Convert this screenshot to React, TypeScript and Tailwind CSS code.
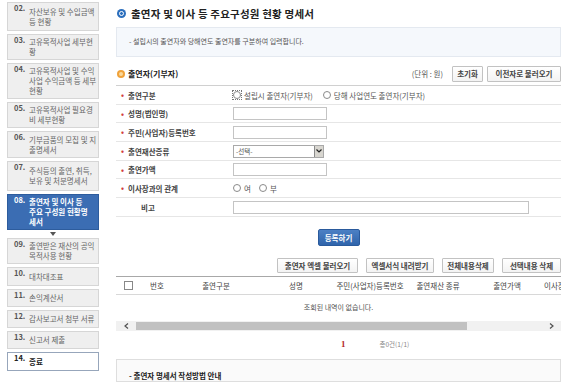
import React from 'react'

const menu = [
  { no: '02.', lines: ['자산보유 및 수입금액', '등 현황'], h: 'h-[29px]' },
  { no: '03.', lines: ['고유목적사업 세부현', '황'], h: 'h-[26px]' },
  { no: '04.', lines: ['고유목적사업 및 수익', '사업 수익금액 등 세부', '현황'], h: 'h-[36px]' },
  { no: '05.', lines: ['고유목적사업 필요경', '비 세부현황'], h: 'h-[26px]' },
  { no: '06.', lines: ['기부금품의 모집 및 지', '출명세서'], h: 'h-[27px]' },
  { no: '07.', lines: ['주식등의 출연, 취득,', '보유 및 처분명세서'], h: 'h-[30px]' },
  { no: '08.', lines: ['출연자 및 이사 등', '주요 구성원 현황명', '세서'], h: 'h-[36px]', active: true },
  { no: '09.', lines: ['출연받은 재산의 공익', '목적사용 현황'], h: 'h-[26px]' },
  { no: '10.', lines: ['대차대조표'], h: 'h-[19px]' },
  { no: '11.', lines: ['손익계산서'], h: 'h-[18px]' },
  { no: '12.', lines: ['감사보고서 첨부 서류'], h: 'h-[18px]' },
  { no: '13.', lines: ['신고서 제출'], h: 'h-[18px]' },
  { no: '14.', lines: ['종료'], h: 'h-[19px]', last: true },
]

const Radio = ({ focus }: { focus?: boolean }) => (
  <span className={`inline-flex items-center justify-center ${focus ? 'outline outline-1 outline-dotted outline-[#777]' : ''}`}>
    <span className="w-[8px] h-[8px] rounded-full border border-[#8a8a8a] bg-white" />
  </span>
)

const Input = ({ w = 'w-[94px]' }: { w?: string }) => (
  <div className={`${w} h-[13px] border border-[#c4c4c4] bg-white`} />
)

const Row = ({ label, bullet = true, h, children }: { label: string; bullet?: boolean; h: string; children?: React.ReactNode }) => (
  <div className={`flex ${h} border-b border-[#e6e6e6]`}>
    <div className="w-[112px] shrink-0 flex items-center pl-[5px] font-bold text-[#444]">
      {bullet ? <span className="w-[7px] text-[#d23c3c] text-[8px]">•</span> : <span className="w-[20px]" />}
      {label}
    </div>
    <div className="flex-1 flex items-center pl-[5px]">{children}</div>
  </div>
)

const Btn = ({ w, children }: { w: string; children: React.ReactNode }) => (
  <div className={`${w} h-full flex items-center justify-center border border-[#c2c2c2] bg-gradient-to-b from-white to-[#f3f3f3] font-bold text-[#444] rounded-[1px]`}>
    {children}
  </div>
)

const cols = [
  { t: '', w: 'w-[24px]' },
  { t: '번호', w: 'w-[34px]' },
  { t: '출연구분', w: 'w-[84px]' },
  { t: '성명', w: 'w-[76px]' },
  { t: '주민(사업자)등록번호', w: 'w-[72px]' },
  { t: '출연재산 종류', w: 'w-[64px]' },
  { t: '출연가액', w: 'w-[74px]' },
  { t: '이사장과의 관계', w: 'w-[80px]' },
]

export default function App() {
  return (
    <div className="w-[567px] h-[382px] overflow-hidden bg-white flex font-['Noto_Sans_CJK_KR','Noto_Sans',sans-serif] text-[7.5px] text-[#444]">
      {/* left step menu */}
      <aside className="w-[110px] shrink-0 pl-[7px] pt-[2px] flex flex-col gap-[3px] text-[7.5px]">
        {menu.map((m) => (
          <React.Fragment key={m.no}>
            <div
              className={`w-[92px] ${m.h} flex items-center pl-[6px] leading-[10px] border ${
                m.active
                  ? 'bg-[#3b6db3] border-[#2d5c9d] text-white font-bold'
                  : m.last
                  ? 'bg-white border-[#97a6bb] text-[#222] font-bold'
                  : 'bg-[#efefef] border-[#d6d6d6] text-[#666]'
              }`}
            >
              <span className={`w-[15px] shrink-0 self-start font-bold ${m.active ? 'text-white' : m.last ? 'text-[#222]' : 'text-[#555]'}`}>
                {m.no}
              </span>
              <div className="flex flex-col whitespace-nowrap">
                {m.lines.map((l) => (
                  <span key={l}>{l}</span>
                ))}
              </div>
            </div>
            {m.active && (
              <div className="w-[92px] h-[4px] -my-[1px] flex justify-center">
                <span className="w-0 h-0 border-l-[3px] border-r-[3px] border-t-[4px] border-l-transparent border-r-transparent border-t-[#555]" />
              </div>
            )}
          </React.Fragment>
        ))}
      </aside>

      {/* main content */}
      <main className="flex-1 min-w-0 pl-[6px] pr-[6px] flex flex-col">
        <div className="h-[27px] flex items-center gap-[5px] pl-[1px]">
          <span className="w-[9px] h-[9px] rounded-full bg-[#2c6fbd] flex items-center justify-center">
            <span className="w-[5px] h-[5px] rounded-full border border-white bg-[#2c6fbd]" />
          </span>
          <span className="text-[10.5px] font-bold text-[#222] tracking-[0.2px]">출연자 및 이사 등 주요구성원 현황 명세서</span>
        </div>

        <div className="h-[30px] flex items-center pl-[12px] bg-[#f5f8fc] border border-[#e4e9f0] text-[7px] text-[#555]">
          - 설립시의 출연자와 당해연도 출연자를 구분하여 입력합니다.
        </div>

        <div className="mt-[9px] h-[17px] flex items-center">
          <span className="w-[8px] h-[8px] rounded-full bg-[#f0a23a] flex items-center justify-center ml-[1px]">
            <span className="w-[4px] h-[4px] rounded-full bg-[#fbd89a]" />
          </span>
          <span className="ml-[3px] text-[8px] font-bold text-[#222]">출연자(기부자)</span>
          <span className="ml-auto text-[#555] mr-[9px]">(단위 : 원)</span>
          <div className="flex gap-[4px] h-full">
            <Btn w="w-[31px]">초기화</Btn>
            <Btn w="w-[74px]">이전자로 불러오기</Btn>
          </div>
        </div>

        <div className="mt-[3px] border-t border-[#d0d0d0]">
          <Row label="출연구분" h="h-[19px]">
            <div className="flex items-center gap-[3px] text-[#555]">
              <Radio focus />
              <span>설립시 출연자(기부자)</span>
              <span className="ml-[4px]" />
              <Radio />
              <span>당해 사업연도 출연자(기부자)</span>
            </div>
          </Row>
          <Row label="성명(법인명)" h="h-[18px]">
            <Input />
          </Row>
          <Row label="주민(사업자)등록번호" h="h-[19px]">
            <Input />
          </Row>
          <Row label="출연재산종류" h="h-[19px]">
            <div className="w-[91px] h-[13px] border border-[#a9a9a9] bg-white flex items-center">
              <span className="flex-1 pl-[2px] text-[6.5px] text-[#555]">-선택-</span>
              <span className="w-[9px] h-full bg-[#d8d6d0] border-l border-[#8a8a8a] flex items-center justify-center">
                <svg width="6" height="4" viewBox="0 0 6 4">
                  <path d="M0.5 0.5 L3 3 L5.5 0.5" fill="none" stroke="#222" strokeWidth="1.2" />
                </svg>
              </span>
            </div>
          </Row>
          <Row label="출연가액" h="h-[18px]">
            <Input />
          </Row>
          <Row label="이사장과의 관계" h="h-[19px]">
            <div className="flex items-center gap-[3px] text-[#555]">
              <Radio />
              <span>여</span>
              <span className="ml-[2px]" />
              <Radio />
              <span>부</span>
            </div>
          </Row>
          <Row label="비고" bullet={false} h="h-[19px]">
            <Input w="w-[296px]" />
          </Row>
        </div>

        <div className="mt-[12px] self-center h-[17px] w-[42px] rounded-[2px] bg-gradient-to-b from-[#4c80c4] to-[#2f64ab] border border-[#2a5a9c] text-white font-bold flex items-center justify-center">
          등록하기
        </div>

        <div className="mt-[12px] h-[15px] flex justify-end gap-[8px]">
          <Btn w="w-[81px]">출연자 엑셀 불러오기</Btn>
          <Btn w="w-[68px]">엑셀서식 내려받기</Btn>
          <Btn w="w-[52px]">전체내용삭제</Btn>
          <Btn w="w-[59px]">선택내용 삭제</Btn>
        </div>

        <div className="mt-[3px] overflow-hidden">
          <div className="w-max flex h-[19px] border-t border-[#a8a8a8] border-b border-b-[#d8d8d8] text-[#444]">
            {cols.map((c, i) => (
              <div key={i} className={`${c.w} shrink-0 flex items-center ${i === 7 ? 'justify-start' : 'justify-center'} whitespace-nowrap`}>
                {i === 0 ? <span className="w-[9px] h-[9px] border border-[#888] bg-white" /> : c.t}
              </div>
            ))}
          </div>
        </div>
        <div className="h-[24px] flex items-center justify-center text-[7px] text-[#555]">조회된 내역이 없습니다.</div>

        <div className="mt-[2px] h-[10px] bg-[#f1f1f1] flex items-center">
          <span className="w-[20px] flex justify-center">
            <svg width="5" height="6" viewBox="0 0 5 6">
              <path d="M4 0.5 L1 3 L4 5.5" fill="none" stroke="#505050" strokeWidth="1.2" />
            </svg>
          </span>
          <span className="w-[331px] h-[8px] bg-[#c1c1c1]" />
          <span className="flex-1" />
          <span className="w-[20px] flex justify-center">
            <svg width="5" height="6" viewBox="0 0 5 6">
              <path d="M1 0.5 L4 3 L1 5.5" fill="none" stroke="#505050" strokeWidth="1.2" />
            </svg>
          </span>
        </div>

        <div className="mt-[6px] h-[16px] flex items-center">
          <span className="ml-[225px] font-['Liberation_Serif',serif] font-bold text-[9px] text-[#b52b2b]">1</span>
          <span className="ml-[34px] text-[6.5px] text-[#888]">총0건(1/1)</span>
        </div>

        <div className="mt-[6px] flex-1 border border-[#dedede] bg-[#fafafa] pt-[10px] pl-[12px]">
          <span className="font-bold text-[#222] text-[7.5px]">- 출연자 명세서 작성방법 안내</span>
        </div>
      </main>
    </div>
  )
}
